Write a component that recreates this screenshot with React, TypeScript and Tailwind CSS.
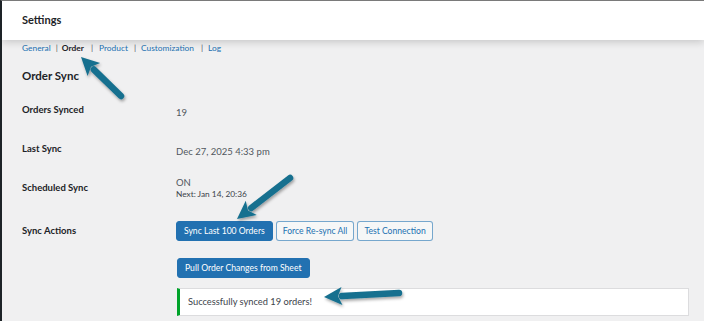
import React from 'react';

const font = { fontFamily: 'Lato, "Open Sans", sans-serif' };

const Arrow: React.FC<{ x1: number; y1: number; x2: number; y2: number }> = ({ x1, y1, x2, y2 }) => {
  const a = Math.atan2(y2 - y1, x2 - x1);
  const head = 18;
  const half = 9;
  const bx = x2 - Math.cos(a) * head;
  const by = y2 - Math.sin(a) * head;
  const px = -Math.sin(a);
  const py = Math.cos(a);
  return (
    <g filter="url(#sh)">
      <line x1={x1} y1={y1} x2={bx} y2={by} stroke="#17708f" strokeWidth={6.5} strokeLinecap="round" />
      <polygon
        points={`${x2},${y2} ${bx + px * half},${by + py * half} ${bx + Math.cos(a) * 4},${by + Math.sin(a) * 4} ${bx - px * half},${by - py * half}`}
        fill="#17708f"
      />
    </g>
  );
};

const Row: React.FC<{ label: string; className?: string; children: React.ReactNode }> = ({ label, className, children }) => (
  <div className={`grid grid-cols-[154px_1fr] items-center ${className ?? ''}`}>
    <div className="text-[9.5px] font-bold text-[#1d2327]">{label}</div>
    <div>{children}</div>
  </div>
);

export default function App() {
  return (
    <div style={font} className="relative w-[704px] h-[321px] overflow-hidden bg-[#f0f0f1] border-t border-[#7a7a7a] border-l-2 border-l-[#1d2327]">
      <div className="h-[39px] bg-white flex items-center px-5 shadow-[0_2px_8px_rgba(0,0,0,0.18)] relative">
        <h1 className="text-[11px] font-bold text-[#1d2327]">Settings</h1>
      </div>

      <div className="px-5">
        <nav className="flex items-center text-[8.4px] text-[#2271b1] mt-[1px] h-[14px]">
          <span>General</span>
          <span className="text-[#50575e] ml-[5px] mr-[4px]">|</span>
          <span className="font-bold text-[#1d2327]">Order</span>
          <span className="text-[#50575e] ml-[7px] mr-[6px]">|</span>
          <span>Product</span>
          <span className="text-[#50575e] ml-[6px] mr-[5px]">|</span>
          <span>Customization</span>
          <span className="text-[#50575e] ml-[7px] mr-[5px]">|</span>
          <span>Log</span>
        </nav>

        <h2 className="text-[11.5px] font-bold text-[#1d2327] mt-[11px] leading-5">Order Sync</h2>

        <Row label="Orders Synced" className="mt-[12px] h-[18px]">
          <span className="text-[9.5px] text-[#50575e]">19</span>
        </Row>
        <Row label="Last Sync" className="mt-[21px] h-[18px]">
          <span className="text-[9.5px] text-[#50575e]">Dec 27, 2025 4:33 pm</span>
        </Row>
        <Row label="Scheduled Sync" className="mt-[18px] h-[30px]">
          <div className="flex flex-col leading-none">
            <span className="text-[9.5px] text-[#50575e]">ON</span>
            <span className="text-[8.3px] text-[#3c434a] mt-[3px]">Next: Jan 14, 20:36</span>
          </div>
        </Row>
        <Row label="Sync Actions" className="mt-[18px] h-[20px]">
          <div className="flex gap-[3px] text-[8.6px]">
            <button className="h-[20px] px-[7px] rounded-[3px] bg-[#2271b1] border border-[#2271b1] text-white">Sync Last 100 Orders</button>
            <button className="h-[20px] px-[6px] rounded-[3px] bg-[#f6f7f7] border border-[#2271b1]/60 text-[#2271b1]">Force Re-sync All</button>
            <button className="h-[20px] px-[6px] rounded-[3px] bg-[#f6f7f7] border border-[#2271b1]/60 text-[#2271b1]">Test Connection</button>
          </div>
        </Row>
        <div className="ml-[155px] mt-[12px]">
          <button className="h-[20px] px-[7px] rounded-[3px] bg-[#2271b1] border border-[#2271b1] text-white text-[8.6px]">Pull Order Changes from Sheet</button>
        </div>
        <div className="ml-[155px] mt-[10px] w-[512px] h-[28px] bg-white border border-[#dcdcde] border-l-[3px] border-l-[#00a32a] flex items-center pl-[8px]">
          <span className="text-[9.3px] text-[#3c434a]">Successfully synced 19 orders!</span>
        </div>
      </div>

      <svg className="absolute inset-0 pointer-events-none" width="704" height="321">
        <defs>
          <filter id="sh" x="-20%" y="-20%" width="140%" height="140%">
            <feDropShadow dx="1" dy="2" stdDeviation="1.5" floodColor="#000" floodOpacity="0.35" />
          </filter>
        </defs>
        <Arrow x1={119} y1={95} x2={79} y2={56} />
        <Arrow x1={288} y1={177} x2={235} y2={218} />
        <Arrow x1={397} y1={292} x2={322} y2={296} />
      </svg>
    </div>
  );
}
